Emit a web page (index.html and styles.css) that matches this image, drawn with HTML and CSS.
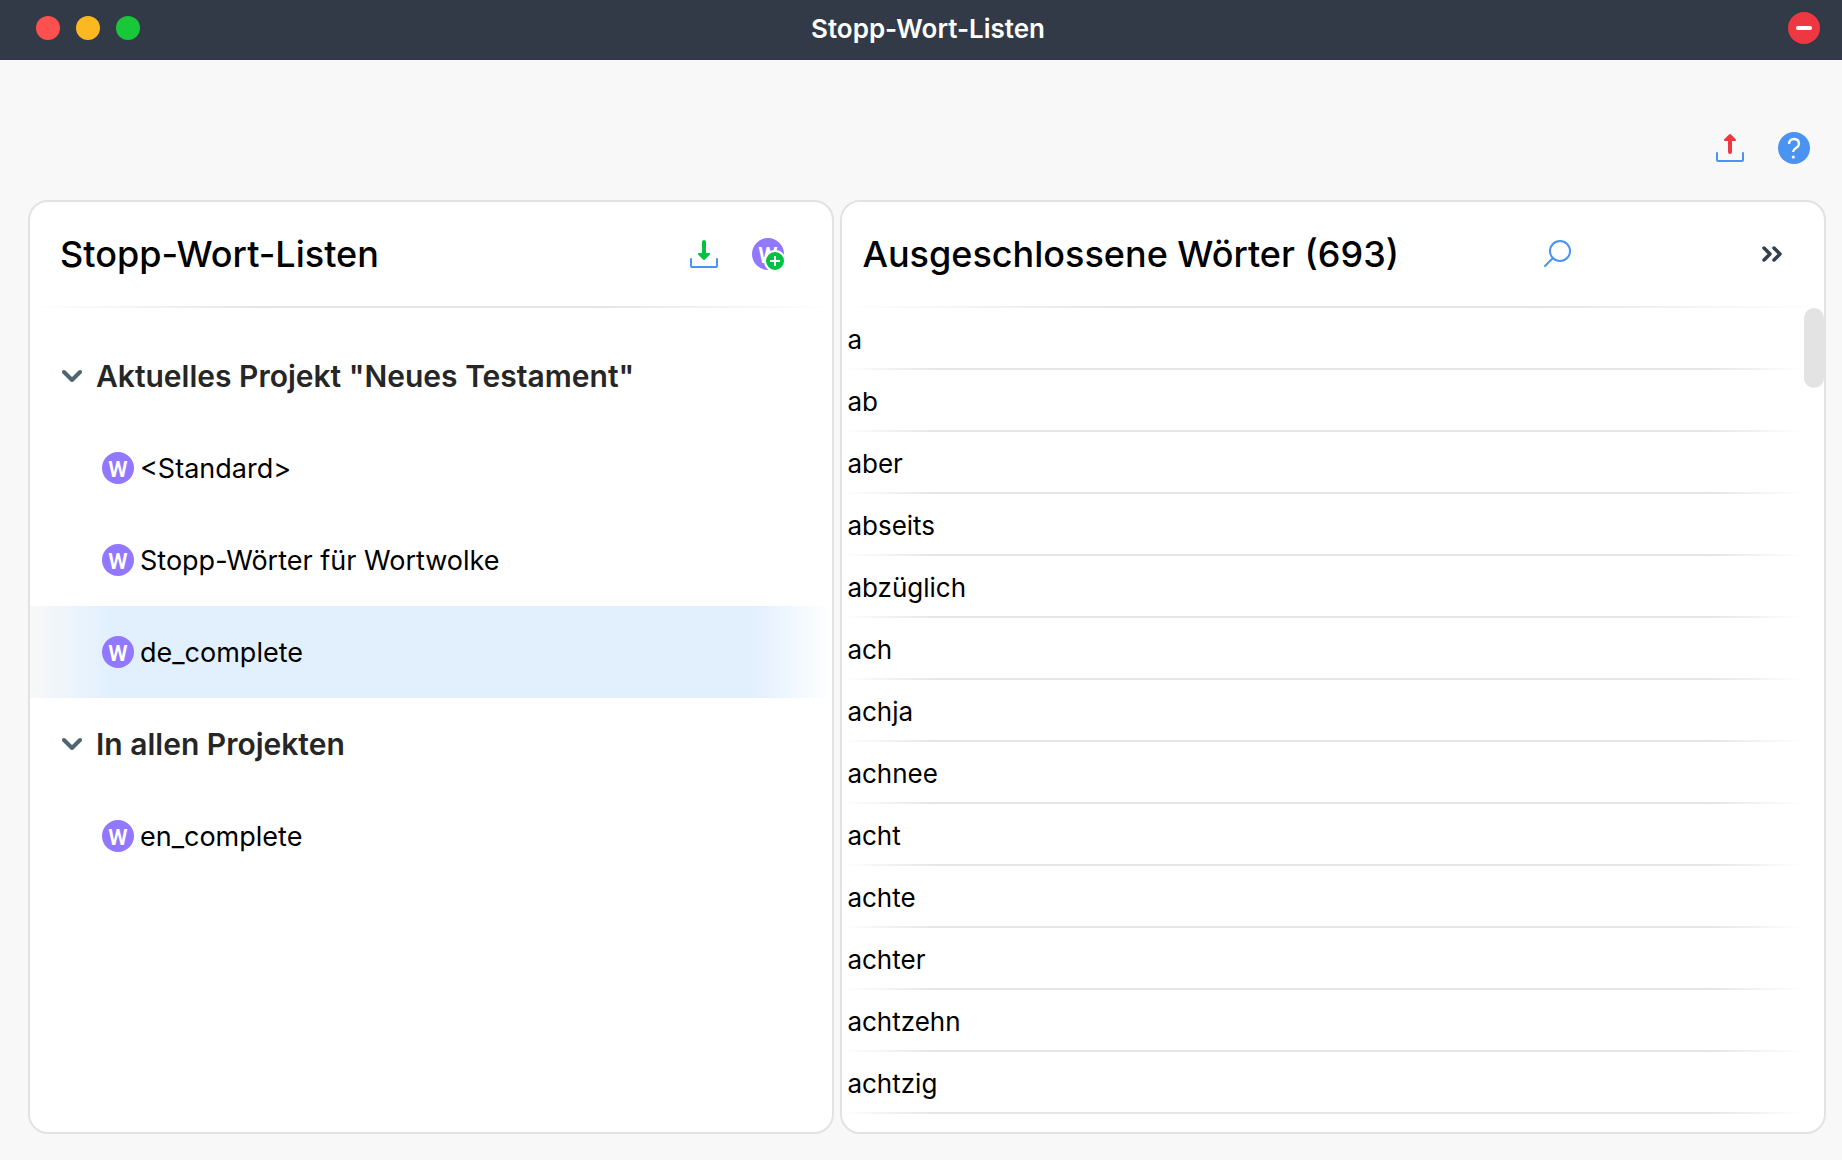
FILE: index.html
```
<!DOCTYPE html>
<html lang="de">
<head>
    <meta charset="UTF-8">
    <meta name="viewport" content="width=device-width, initial-scale=1.0">
    <title>Stopp-Wort-Listen</title>
    <link rel="stylesheet" href="styles.css">
</head>
<body>
    <!-- shared icon shapes -->
    <svg class="sprite" aria-hidden="true">
        <symbol id="icon-word" viewBox="0 0 32 32">
            <circle cx="16" cy="16" r="16" fill="#9278ff"/>
            <text class="word-letter" x="16" y="25" text-anchor="middle">W</text>
        </symbol>
        <symbol id="icon-chevron" viewBox="0 0 20 14">
            <path d="M2 3l8 8 8-8" fill="none" stroke="#526473" stroke-width="4" stroke-linecap="round" stroke-linejoin="round"/>
        </symbol>
    </svg>

    <header class="titlebar">
        <div class="lights">
            <button class="light red" aria-label="Schließen"></button>
            <button class="light yellow" aria-label="Minimieren"></button>
            <button class="light green" aria-label="Maximieren"></button>
        </div>
        <div class="window-title">Stopp-Wort-Listen</div>
        <button class="icon-button end" aria-label="Ausblenden">
            <svg viewBox="0 0 32 32"><circle cx="16" cy="16" r="16" fill="#ef3742"/><path d="M10 16h12" stroke="#fff" stroke-width="4" stroke-linecap="round"/></svg>
        </button>
    </header>

    <div class="toolbar">
        <button class="icon-button" aria-label="Exportieren">
            <svg viewBox="0 0 32 32" fill="none" stroke-linecap="round" stroke-linejoin="round">
                <path d="M3 21v7q0 1 1 1h24q1 0 1-1v-7" stroke="#4a93f1" stroke-width="2"/>
                <path d="M16 20V8" stroke="#ef3742" stroke-width="4"/>
                <path d="M16 3l5 5H11z" fill="#ef3742" stroke="#ef3742" stroke-width="2"/>
            </svg>
        </button>
        <button class="icon-button" aria-label="Hilfe">
            <svg viewBox="0 0 32 32" fill="none"><circle cx="16" cy="16" r="16" fill="#4a93f1"/><path d="M11 12c0-3 2-5 5-5s5 2 5 5c0 4-6 4-6 8" stroke="#fff" stroke-width="2.4"/><circle cx="15.300" cy="25" r="1.600" fill="#fff"/></svg>
        </button>
    </div>

    <main class="panels">
        <section class="panel">
            <div class="panel-header">
                <h1>Stopp-Wort-Listen</h1>
                <button class="icon-button" aria-label="Importieren">
                    <svg viewBox="0 0 32 32" fill="none" stroke-linecap="round" stroke-linejoin="round">
                        <path d="M3 21v7q0 1 1 1h24q1 0 1-1v-7" stroke="#4a93f1" stroke-width="2"/>
                        <path d="M16 4v12" stroke="#00c140" stroke-width="4"/>
                        <path d="M16 21l5-5H11z" fill="#00c140" stroke="#00c140" stroke-width="2"/>
                    </svg>
                </button>
                <button class="icon-button" aria-label="Neue Stopp-Wort-Liste">
                    <svg viewBox="0 0 32 32">
                        <use href="#icon-word"/>
                        <circle cx="23" cy="23" r="10" fill="#00c140" stroke="#fff" stroke-width="2"/>
                        <path d="M23 18v10M18 23h10" stroke="#fff" stroke-width="2"/>
                    </svg>
                </button>
            </div>
            <div class="tree">
                <button class="group"><svg class="chevron"><use href="#icon-chevron"/></svg>Aktuelles Projekt "Neues Testament"</button>
                <button class="item"><svg class="word-icon"><use href="#icon-word"/></svg>&lt;Standard&gt;</button>
                <button class="item"><svg class="word-icon"><use href="#icon-word"/></svg>Stopp-Wörter für Wortwolke</button>
                <button class="item selected"><svg class="word-icon"><use href="#icon-word"/></svg>de_complete</button>
                <button class="group"><svg class="chevron"><use href="#icon-chevron"/></svg>In allen Projekten</button>
                <button class="item"><svg class="word-icon"><use href="#icon-word"/></svg>en_complete</button>
            </div>
        </section>

        <section class="panel">
            <div class="panel-header words-header">
                <h2>Ausgeschlossene Wörter (693)</h2>
                <button class="icon-button search" aria-label="Suchen">
                    <svg viewBox="0 0 32 32" fill="none" stroke="#4a93f1" stroke-width="2" stroke-linecap="round"><circle cx="18" cy="13" r="10"/><path d="M10.500 20.500L3 28"/></svg>
                </button>
                <button class="icon-button" aria-label="Mehr">
                    <svg viewBox="0 0 32 32" fill="none" stroke="#333f4a" stroke-width="3.500" stroke-linecap="round" stroke-linejoin="round"><path d="M8 10l6 6-6 6M18 10l6 6-6 6"/></svg>
                </button>
            </div>
            <div class="words">
                <ul class="word-list">
                    <li>a</li>
                    <li>ab</li>
                    <li>aber</li>
                    <li>abseits</li>
                    <li>abzüglich</li>
                    <li>ach</li>
                    <li>achja</li>
                    <li>achnee</li>
                    <li>acht</li>
                    <li>achte</li>
                    <li>achter</li>
                    <li>achtzehn</li>
                    <li>achtzig</li>
                </ul>
                <div class="scroll-track"><div class="scroll-thumb"></div></div>
            </div>
        </section>
    </main>
</body>
</html>
```
FILE: styles.css
```
* {
    box-sizing: border-box;
}
body {
    font-family: Inter, 'Liberation Sans', sans-serif;
    margin: 0;
    min-height: 100vh;
    display: flex;
    flex-direction: column;
    background-color: #f8f8f8;
    color: #000;
}
button {
    border: none;
    padding: 0;
    background: none;
    font: inherit;
    color: inherit;
    text-align: left;
    cursor: pointer;
}
.sprite {
    display: none;
}
.word-letter {
    font-family: Roboto, sans-serif;
    font-size: 22px;
    font-weight: 600;
    fill: #fff;
}

/* title bar */
.titlebar {
    display: grid;
    grid-template-columns: 1fr auto 1fr;
    align-items: center;
    height: 60px;
    padding: 0 22px 4px 36px;
    background-color: #333a47;
    color: #fff;
}
.lights {
    display: flex;
    gap: 16px;
}
.light {
    width: 24px;
    height: 24px;
    border-radius: 50%;
}
.red {
    background-color: #ff5050;
}
.yellow {
    background-color: #fcb820;
}
.green {
    background-color: #18c838;
}
.window-title {
    font-size: 26px;
    font-weight: 600;
}
.icon-button {
    flex: none;
    width: 32px;
    height: 32px;
}
.icon-button svg {
    display: block;
    width: 32px;
    height: 32px;
}
.end {
    justify-self: end;
}
.toolbar {
    display: flex;
    justify-content: flex-end;
    gap: 32px;
    padding: 72px 32px 36px;
}

/* panels */
.panels {
    flex: 1;
    display: grid;
    grid-template-columns: 9fr 11fr;
    gap: 6px;
    padding: 0 16px 26px 28px;
}
.panel {
    min-width: 0;
    background-color: #fff;
    border: 2px solid #e2e2e2;
    border-radius: 20px;
    overflow: hidden;
}
.panel-header {
    display: flex;
    align-items: center;
    gap: 32px;
    height: 106px;
    padding: 0 48px 2px 30px;
    background: linear-gradient(to right, transparent, #e5e5e5 30%, #e5e5e5 70%, transparent) bottom / 100% 2px no-repeat;
}
.words-header {
    padding: 0 36px 2px 20px;
}
h1, h2 {
    flex: 1;
    margin: 0;
    font-size: 36px;
    font-weight: 500;
    white-space: nowrap;
}
.search {
    margin-right: 150px;
}

/* list tree */
.tree {
    padding-top: 22px;
}
.group, .item {
    display: flex;
    align-items: center;
    width: 100%;
    height: 92px;
}
.group {
    gap: 14px;
    padding-left: 32px;
    font-size: 30px;
    font-weight: 600;
    color: #262626;
}
.item {
    gap: 6px;
    padding-left: 72px;
    font-size: 27px;
}
.selected {
    background: linear-gradient(to right, #f8f8f8, #e2f0fe 10%, #e2f0fe 90%, #fff);
}
.chevron {
    width: 20px;
    height: 14px;
}
.word-icon {
    width: 32px;
    height: 32px;
}

/* excluded words */
.words {
    display: flex;
}
.word-list {
    flex: 1;
    margin: 0;
    padding: 0;
    list-style: none;
    font-size: 26px;
}
.word-list li {
    height: 62px;
    padding-left: 5px;
    line-height: 64px;
    background: linear-gradient(to right, transparent, #e5e5e5 10%, #e5e5e5 90%, transparent) bottom / 100% 2px no-repeat;
}
.scroll-track {
    width: 20px;
}
.scroll-thumb {
    height: 80px;
    border-radius: 10px;
    background-color: #e3e3e3;
}
```
